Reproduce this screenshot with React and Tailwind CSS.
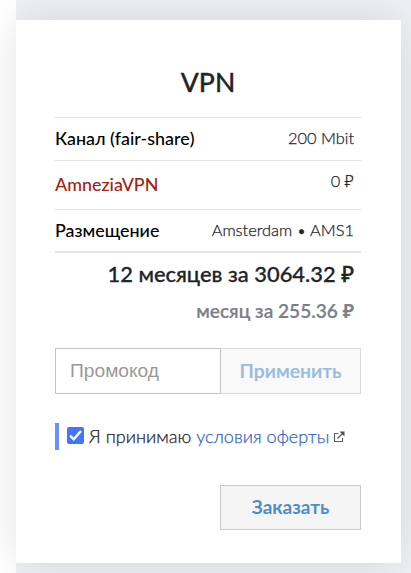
const rows = [
    { label: "Канал (fair-share)", value: "200 Mbit", row: "h-[43px]", labelStyle: "text-black pb-0.5", valueStyle: "pb-px" },
    { label: "AmneziaVPN", value: "0 ₽", row: "h-[49px]", labelStyle: "text-[#a32114] pb-0.5", valueStyle: "pb-[8px]" },
    { label: "Размещение", value: "Amsterdam • AMS1", row: "h-[42px]", labelStyle: "text-black", valueStyle: "" },
];

const ExternalIcon = () => (
    <svg className="ml-[4px] h-3 w-3 shrink-0" viewBox="0 0 12 12" fill="none" stroke="#606060">
        <path d="M5.5 2.5h-4v8h8V7" strokeWidth="1.2" />
        <path d="M4.5 7.5 10 2" strokeWidth="1.5" />
        <path d="M6.5 .5h5v5z" fill="#505050" stroke="none" />
    </svg>
);

const App = () => {
    return (
        <div className="flex h-[573px] w-[411px] overflow-hidden bg-[linear-gradient(to_right,#fff_16px,#eff0f4_16px)] pt-5 pl-4 font-['Lato','Noto_Sans',sans-serif] text-[#212529]">
            <div className="flex h-[543px] w-[385px] flex-col bg-white px-[39px] shadow-[0_0_40px_rgba(0,0,0,0.11)]">
                <h2 className="mt-[42px] h-[55px] w-[306px] text-center text-[26.5px] leading-[40px] font-medium [-webkit-text-stroke:0.3px]">VPN</h2>

                {/* Plan details */}
                <div className="w-[306px] border-b-2 border-[#e4e5e9]">
                    {rows.map((item) => (
                        <div key={item.label} className={`flex items-center justify-between border-t border-[#e4e5e9] pr-[7px] whitespace-nowrap ${item.row}`}>
                            <span className={`text-[17.9px] font-medium ${item.labelStyle}`}>{item.label}</span>
                            <span className={`text-[16.4px] font-light [-webkit-text-stroke:0.25px] ${item.valueStyle}`}>{item.value}</span>
                        </div>
                    ))}
                </div>

                {/* Total */}
                <div className="h-[95px] w-[306px] pr-[7px] text-right whitespace-nowrap">
                    <div className="pt-[2px] text-[21.9px] leading-[38px] font-medium [-webkit-text-stroke:0.3px]">12 месяцев за 3064.32 ₽</div>
                    <div className="text-[19.1px] leading-[36px] font-semibold text-[#7c7f8b] [-webkit-text-stroke:0.2px]">месяц за 255.36 ₽</div>
                </div>

                <div className="flex h-[46px] w-[306px] shrink-0">
                    <input
                        type="text"
                        placeholder="Промокод"
                        className="w-[165px] border border-r-0 border-[#c4c4c4] bg-white px-[14px] font-['Liberation_Sans',sans-serif] text-[19.2px] outline-none placeholder:text-[#999]"
                    />
                    <button className="w-[141px] border border-l-[#c4c4c4] border-[#dcdcdc] bg-[#f9f9f9] text-[19.4px] font-semibold text-[#98bcdd] [-webkit-text-stroke:0.2px]">
                        Применить
                    </button>
                </div>

                <label className="mt-[29px] flex h-[27px] items-center border-l-4 border-[#6990fb] pl-2 text-[18.1px] font-light whitespace-nowrap">
                    <input type="checkbox" defaultChecked className="peer sr-only" />
                    <span className="mr-[5px] mb-[3px] flex h-[17px] w-[17px] items-center justify-center rounded-[2px] bg-[#4574ff]">
                        <svg className="h-[17px] w-[17px]" viewBox="0 0 17 17" fill="none" stroke="#fff" strokeWidth="2.4">
                            <path d="m3 8.7 3.7 3.5L14 4" />
                        </svg>
                    </span>
                    <span className="[-webkit-text-stroke:0.25px]">
                        Я принимаю <a href="#" className="text-[#3564c4]">условия оферты</a>
                    </span>
                    <ExternalIcon />
                </label>

                <button className="mt-[35px] ml-[165px] h-[45px] w-[141px] shrink-0 border border-[#c7c9c9] bg-[#f5f5f5] text-[19px] font-bold text-[#4d8ec7]">
                    Заказать
                </button>
            </div>
        </div>
    );
};

export default App;
